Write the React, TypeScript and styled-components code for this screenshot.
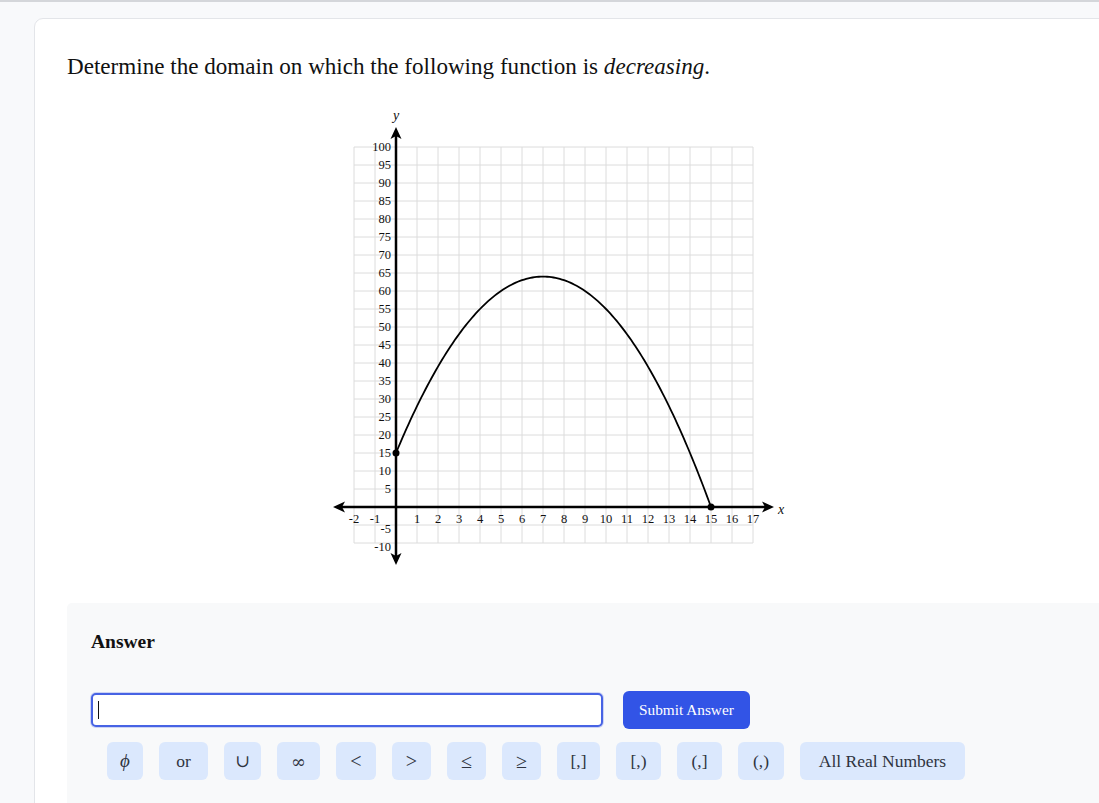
import React from 'react';
import styled, { createGlobalStyle } from 'styled-components';

const GlobalStyle = createGlobalStyle`
  html, body {
    margin: 0;
    padding: 0;
    background: #f8f9fb;
    overflow: hidden;
  }
  body {
    font-family: "Liberation Serif", "DejaVu Serif", serif;
    color: #111;
  }
`;

const Page = styled.div`
  border-top: 2px solid #d4d6da;
  padding: 16px 0 0 34px;
  min-height: 803px;
  box-sizing: border-box;
`;

const Card = styled.div`
  width: 1120px;
  background: #fff;
  border: 1px solid #e3e5e9;
  border-radius: 9px;
  padding: 30px 0 0 32px;
  min-height: 820px;
  box-sizing: border-box;
`;

const Title = styled.h1`
  margin: 0;
  font-size: 23.1px;
  font-weight: 400;
  line-height: 34px;
  color: #111;

  em {
    font-style: italic;
  }
`;

const GraphBox = styled.div`
  margin: 22px 0 0 253px;
  height: 498px;
`;

const AnswerPanel = styled.section`
  background: #f8f9fa;
  border-radius: 5px;
  padding: 26px 0 30px 24px;
`;

const AnswerLabel = styled.h2`
  margin: 0 0 36px;
  font-size: 19.5px;
  font-weight: 700;
  line-height: 26px;
`;

const InputRow = styled.div`
  display: flex;
  align-items: center;
  gap: 20px;
`;

const InputWrap = styled.div`
  position: relative;
  display: flex;
`;

const AnswerInput = styled.input`
  width: 512px;
  height: 34px;
  box-sizing: border-box;
  border: 2px solid #4763e4;
  border-radius: 5px;
  box-shadow: 0 0 0 1px rgba(71, 99, 228, 0.25);
  padding: 0 6px;
  font-family: inherit;
  font-size: 16px;
  background: #fff;
  outline: none;
`;

const Caret = styled.span`
  position: absolute;
  left: 7px;
  top: 8px;
  width: 1px;
  height: 18px;
  background: #111;
`;

const SubmitButton = styled.button`
  height: 38px;
  padding: 0 16px;
  border: none;
  border-radius: 6px;
  background: #3254e6;
  color: #fff;
  font-family: inherit;
  font-size: 15.3px;
  cursor: pointer;
`;

const SymbolRow = styled.div`
  display: flex;
  gap: 16px;
  margin: 13px 0 0 16px;
`;

const SymbolButton = styled.button<{ $w: number; $size?: number; $italic?: boolean; $font?: string }>`
  width: ${(p) => p.$w}px;
  height: 38px;
  padding: 0;
  border: none;
  border-radius: 6px;
  background: #dbe8fd;
  color: #2f3440;
  font-family: ${(p) => p.$font ?? 'inherit'};
  font-size: ${(p) => p.$size ?? 17.5}px;
  font-style: ${(p) => (p.$italic ? 'italic' : 'normal')};
  cursor: pointer;
`;

const symbols: { label: string; w: number; size?: number; italic?: boolean; font?: string }[] = [
  { label: 'ϕ', w: 36, size: 19, italic: true },
  { label: 'or', w: 49 },
  { label: '∪', w: 37 },
  { label: '∞', w: 43, size: 18, font: '"DejaVu Serif", serif' },
  { label: '<', w: 40, size: 20 },
  { label: '>', w: 39, size: 20 },
  { label: '≤', w: 39, size: 20 },
  { label: '≥', w: 39, size: 20 },
  { label: '[,]', w: 43 },
  { label: '[,)', w: 45 },
  { label: '(,]', w: 45 },
  { label: '(,)', w: 46 },
  { label: 'All Real Numbers', w: 165 },
];

// graph coords: svg origin sits at page (320,105)
const X = (u: number) => 76 + 21 * u;
const Y = (v: number) => 402 - 3.6 * v;

const Graph = () => {
  const xs: number[] = [];
  for (let u = -2; u <= 17; u++) xs.push(u);
  const ys: number[] = [];
  for (let v = -10; v <= 100; v += 5) ys.push(v);

  let d = '';
  for (let i = 0; i <= 150; i++) {
    const u = (15 * i) / 150;
    const v = -u * u + 14 * u + 15;
    d += `${i === 0 ? 'M' : 'L'}${X(u).toFixed(2)},${Y(v).toFixed(2)} `;
  }

  const labelFont = {
    fontFamily: '"Liberation Serif", serif',
    fontSize: 12.5,
    fill: '#111',
  };

  return (
    <svg width="480" height="470" viewBox="0 0 480 470">
      <g stroke="#dcdcdc" strokeWidth="1">
        {xs.map((u) => (
          <line key={`gx${u}`} x1={X(u)} y1={Y(100)} x2={X(u)} y2={Y(-10)} />
        ))}
        {ys.map((v) => (
          <line key={`gy${v}`} x1={X(-2)} y1={Y(v)} x2={X(17)} y2={Y(v)} />
        ))}
      </g>

      <g stroke="#000" strokeWidth="2.5">
        <line x1={X(-2.6)} y1={Y(0)} x2={X(17.6)} y2={Y(0)} />
        <line x1={X(0)} y1={30} x2={X(0)} y2={Y(-15)} />
      </g>
      <g fill="#000">
        <path d={`M13,${Y(0)} L25,${Y(0) - 5.5} L22,${Y(0)} L25,${Y(0) + 5.5} Z`} />
        <path d={`M454,${Y(0)} L442,${Y(0) - 5.5} L445,${Y(0)} L442,${Y(0) + 5.5} Z`} />
        <path d={`M${X(0)},22 L${X(0) - 5.5},34 L${X(0)},31 L${X(0) + 5.5},34 Z`} />
        <path d={`M${X(0)},460 L${X(0) - 5.5},448 L${X(0)},451 L${X(0) + 5.5},448 Z`} />
      </g>

      <text x={X(0)} y={15} textAnchor="middle" {...labelFont} fontSize={14} fontStyle="italic">
        y
      </text>
      <text x={458} y={Y(0) + 7} {...labelFont} fontSize={14} fontStyle="italic">
        x
      </text>

      {ys
        .filter((v) => v !== 0)
        .map((v) => (
          <text
            key={`ly${v}`}
            x={71}
            y={Y(v) + (v < 0 ? 8 : 4)}
            textAnchor="end"
            {...labelFont}
          >
            {v < 0 ? `-${-v}` : v}
          </text>
        ))}
      {xs
        .filter((u) => u !== 0)
        .map((u) => (
          <text
            key={`lx${u}`}
            x={X(u)}
            y={Y(0) + 16}
            textAnchor="middle"
            {...labelFont}
          >
            {u < 0 ? `-${-u}` : u}
          </text>
        ))}

      <path d={d} fill="none" stroke="#000" strokeWidth="1.8" />
      <circle cx={X(0)} cy={Y(15)} r="3.5" fill="#000" />
      <circle cx={X(15)} cy={Y(0)} r="3.5" fill="#000" />
    </svg>
  );
};

const App = () => (
  <>
    <GlobalStyle />
    <Page>
      <Card>
        <Title>
          Determine the domain on which the following function is <em>decreasing</em>.
        </Title>
        <GraphBox>
          <Graph />
        </GraphBox>
        <AnswerPanel>
          <AnswerLabel>Answer</AnswerLabel>
          <InputRow>
            <InputWrap>
              <AnswerInput aria-label="answer" />
              <Caret />
            </InputWrap>
            <SubmitButton>Submit Answer</SubmitButton>
          </InputRow>
          <SymbolRow>
            {symbols.map((s) => (
              <SymbolButton
                key={s.label}
                $w={s.w}
                $size={s.size}
                $italic={s.italic}
                $font={s.font}
              >
                {s.label}
              </SymbolButton>
            ))}
          </SymbolRow>
        </AnswerPanel>
      </Card>
    </Page>
  </>
);

export default App;
